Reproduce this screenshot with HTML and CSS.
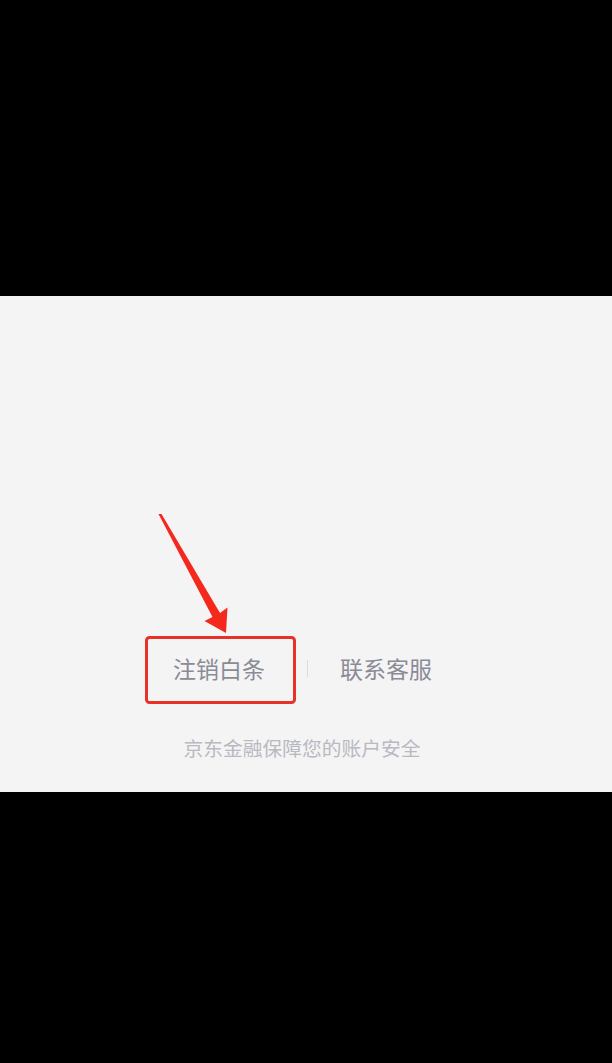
FILE: index.html
```html
<!DOCTYPE html>
<html lang="zh">
<head>
<meta charset="utf-8">
<link rel="stylesheet" href="styles.css">
</head>
<body>
<div class="screen">
  <div class="panel">
    <div class="links">
      <span class="link">注销白条</span>
      <span class="sep"></span>
      <span class="link">联系客服</span>
    </div>
    <div class="note">京东金融保障您的账户安全</div>
  </div>
  <svg class="annot" width="612" height="1063" viewBox="0 0 612 1063">
    <rect x="146.5" y="637.5" width="148" height="65" rx="3" ry="3" fill="none" stroke="#e83229" stroke-width="3"/>
    <polygon points="158.5,514 161.5,514 220,613 227.5,607.5 226,633 204.5,621 212.5,617" fill="#f5281e"/>
  </svg>
</div>
</body>
</html>
```
FILE: styles.css
```css
html, body {
  margin: 0;
  padding: 0;
  background: #000;
}
.screen {
  position: relative;
  width: 612px;
  height: 1063px;
  background: #000;
  padding-top: 296px;
  box-sizing: border-box;
}
.panel {
  height: 496px;
  background: #f4f4f4;
  display: flex;
  flex-direction: column;
  align-items: center;
  padding-top: 355px;
  box-sizing: border-box;
  font-family: "Noto Sans CJK SC", "Noto Sans", sans-serif;
}
.links {
  display: flex;
  align-items: center;
  height: 34px;
  padding-right: 7px;
}
.link {
  font-size: 23px;
  line-height: 34px;
  color: #8b8b97;
}
.sep {
  width: 1px;
  height: 17px;
  margin: 0 32px 0 42px;
  background: #dcdcdc;
}
.note {
  margin-top: 49px;
  padding-right: 8px;
  font-size: 19.75px;
  line-height: 28px;
  color: #b9b9c2;
}
.annot {
  position: absolute;
  left: 0;
  top: 0;
  pointer-events: none;
}
```
